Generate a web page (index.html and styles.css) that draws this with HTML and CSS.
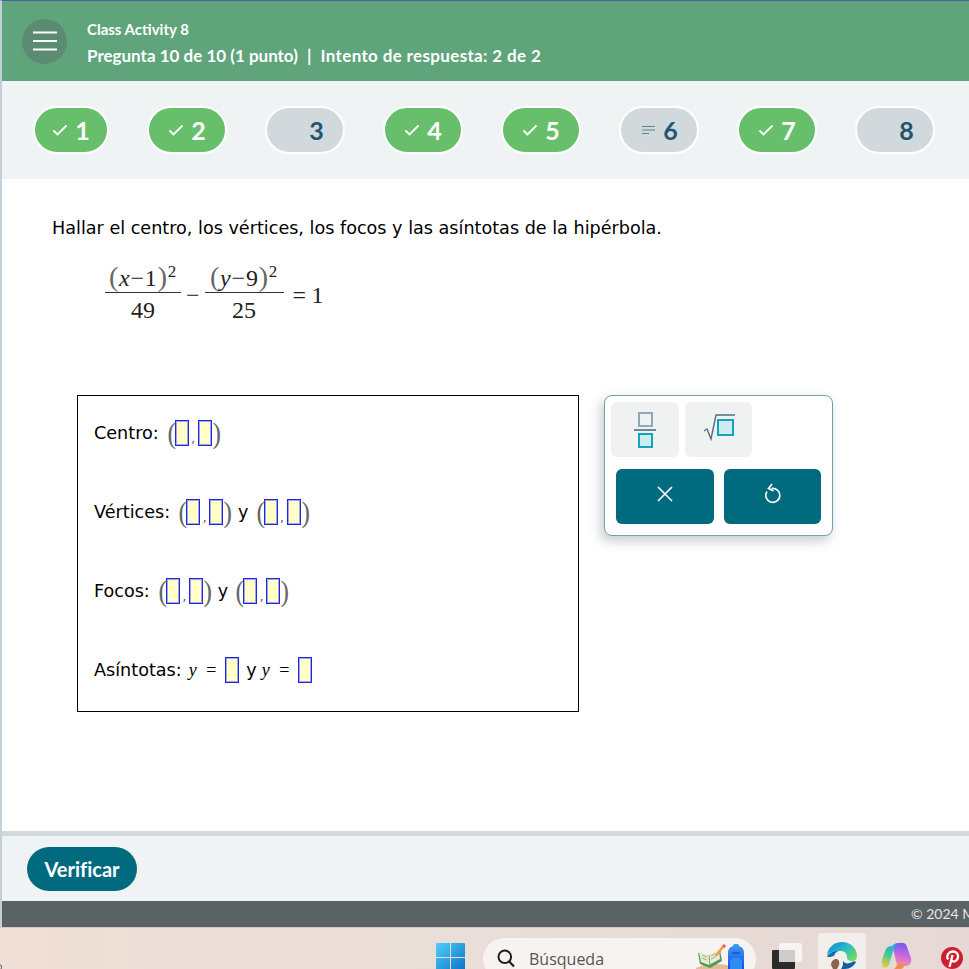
FILE: index.html

```html
<!DOCTYPE html>
<html lang="en">
<head>
    <meta charset="UTF-8">
    <meta name="viewport" content="width=device-width, initial-scale=1.0">
    <title>Class Activity 8</title>
    <link rel="stylesheet" href="styles.css">
</head>
<body>
    <div class="window">
        <header class="top-bar">
            <button class="menu-btn" aria-label="Menu">
                <svg width="24" height="20" viewBox="0 0 24 20"><path d="M0 1.5h24M0 10h24M0 18.5h24" stroke="#fff" stroke-width="2"/></svg>
            </button>
            <div class="top-text">
                <div class="activity-name">Class Activity 8</div>
                <div class="question-info">Pregunta 10 de 10 (1 punto) <span class="sep">|</span> <span class="attempt">Intento de respuesta: 2 de 2</span></div>
            </div>
        </header>

        <nav class="question-nav">
            <div class="pill done first"><svg class="pill-icon" width="16" height="12" viewBox="0 0 16 12"><path d="M1.5 6.5l4 4L14.5 1.5" fill="none" stroke="#fff" stroke-width="1.8"/></svg><span>1</span></div>
            <div class="pill done"><svg class="pill-icon" width="16" height="12" viewBox="0 0 16 12"><path d="M1.5 6.5l4 4L14.5 1.5" fill="none" stroke="#fff" stroke-width="1.8"/></svg><span>2</span></div>
            <div class="pill"><span class="pill-icon"></span><span>3</span></div>
            <div class="pill done"><svg class="pill-icon" width="16" height="12" viewBox="0 0 16 12"><path d="M1.5 6.5l4 4L14.5 1.5" fill="none" stroke="#fff" stroke-width="1.8"/></svg><span>4</span></div>
            <div class="pill done"><svg class="pill-icon" width="16" height="12" viewBox="0 0 16 12"><path d="M1.5 6.5l4 4L14.5 1.5" fill="none" stroke="#fff" stroke-width="1.8"/></svg><span>5</span></div>
            <div class="pill"><svg class="pill-icon" width="16" height="12" viewBox="0 0 16 12"><path d="M2 2.5h13M2 6h13M2 9.500h7" fill="none" stroke="#5d8493" stroke-width="1.2"/></svg><span>6</span></div>
            <div class="pill done"><svg class="pill-icon" width="16" height="12" viewBox="0 0 16 12"><path d="M1.5 6.5l4 4L14.5 1.5" fill="none" stroke="#fff" stroke-width="1.8"/></svg><span>7</span></div>
            <div class="pill"><span class="pill-icon"></span><span>8</span></div>
        </nav>

        <main class="content">
            <p class="prompt">Hallar el centro, los vértices, los focos y las asíntotas de la hipérbola.</p>

            <div class="equation">
                <div class="frac">
                    <div class="num"><span class="big-paren">(</span><i>x</i>&minus;1<span class="big-paren">)</span><sup>2</sup></div>
                    <div class="den">49</div>
                </div>
                <span class="op">&minus;</span>
                <div class="frac wide">
                    <div class="num"><span class="big-paren">(</span><i>y</i>&minus;9<span class="big-paren">)</span><sup>2</sup></div>
                    <div class="den">25</div>
                </div>
                <span class="op equals">= 1</span>
            </div>

            <div class="work-area">
                <div class="answer-box">
                    <div class="answer-row">
                        <span class="row-label">Centro:</span>
                        <span class="pair"><span class="paren">(</span><span class="slot"></span><span class="comma">,</span><span class="slot"></span><span class="paren">)</span></span>
                    </div>
                    <div class="answer-row">
                        <span class="row-label">Vértices:</span>
                        <span class="pair"><span class="paren">(</span><span class="slot"></span><span class="comma">,</span><span class="slot"></span><span class="paren">)</span></span>
                        <span>y</span>
                        <span class="pair"><span class="paren">(</span><span class="slot"></span><span class="comma">,</span><span class="slot"></span><span class="paren">)</span></span>
                    </div>
                    <div class="answer-row">
                        <span class="row-label">Focos:</span>
                        <span class="pair"><span class="paren">(</span><span class="slot"></span><span class="comma">,</span><span class="slot"></span><span class="paren">)</span></span>
                        <span>y</span>
                        <span class="pair"><span class="paren">(</span><span class="slot"></span><span class="comma">,</span><span class="slot"></span><span class="paren">)</span></span>
                    </div>
                    <div class="answer-row">
                        <span>Asíntotas:</span>
                        <span class="math-var"><i>y</i> =</span><span class="slot"></span>
                        <span class="and-y">y</span>
                        <span class="math-var"><i>y</i> =</span><span class="slot"></span>
                    </div>
                </div>

                <div class="palette">
                    <div class="palette-tools">
                        <button class="tool" aria-label="Fraction">
                            <svg width="22" height="36" viewBox="0 0 22 36">
                                <rect x="5" y="1" width="13" height="13" fill="#f0f2f2" stroke="#8ea9b3" stroke-width="2"/>
                                <path d="M0 18h22" stroke="#6d8b96" stroke-width="2"/>
                                <rect x="5" y="22" width="13" height="13" fill="#cfecf2" stroke="#12a3bd" stroke-width="2"/>
                            </svg>
                        </button>
                        <button class="tool" aria-label="Square root">
                            <svg width="32" height="28" viewBox="0 0 32 28">
                                <path d="M1 18l3-2 4 10 5-24h19" fill="none" stroke="#4f6f7c" stroke-width="1.4"/>
                                <rect x="15" y="7" width="15" height="15" fill="#cfecf2" stroke="#12a3bd" stroke-width="2"/>
                            </svg>
                        </button>
                    </div>
                    <div class="palette-actions">
                        <button class="action" aria-label="Clear">
                            <svg width="16" height="16" viewBox="0 0 16 16"><path d="M1 1l14 14M15 1L1 15" stroke="#fff" stroke-width="1.7"/></svg>
                        </button>
                        <button class="action" aria-label="Undo">
                            <svg width="16" height="22" viewBox="0 0 16 22"><path d="M6.500 5.500a7 7 0 1 1-4.500 3M7 1L3.500 5.500 8.500 8" fill="none" stroke="#fff" stroke-width="1.6"/></svg>
                        </button>
                    </div>
                </div>
            </div>
        </main>

        <div class="action-bar">
            <button class="verify-btn">Verificar</button>
        </div>
        <footer class="copyright">&copy; 2024 McGraw Hill</footer>
    </div>

    <div class="taskbar">
        <svg class="desk-sliver" width="3" height="6" viewBox="0 0 3 6"><path d="M0 0.500c2 1 2 4 0 5.500" fill="none" stroke="#444" stroke-width="1"/></svg>
        <svg class="win-logo" width="29" height="26" viewBox="0 0 29 26">
            <defs>
                <linearGradient id="winBlue" x1="0" y1="0" x2="1" y2="1"><stop offset="0" stop-color="#4fd0fa"/><stop offset="1" stop-color="#0a6fc4"/></linearGradient>
            </defs>
            <path d="M0 1a1 1 0 0 1 1-1h13v14H0zM15 0h13a1 1 0 0 1 1 1v13H15zM0 15h14v14H0zM15 15h14v14H15z" fill="url(#winBlue)"/>
        </svg>
        <div class="search-box">
            <svg class="search-icon" width="18" height="18" viewBox="0 0 18 18"><circle cx="7.800" cy="7.800" r="6.300" fill="none" stroke="#222" stroke-width="2"/><path d="M12.200 12.500l4.800 5" stroke="#222" stroke-width="2.200"/></svg>
            <span class="search-text">Búsqueda</span>
            <svg class="search-art" width="50" height="26" viewBox="0 0 50 26">
                <defs>
                    <linearGradient id="packBlue" x1="0" y1="0" x2="0" y2="1"><stop offset="0" stop-color="#3f9bf5"/><stop offset="1" stop-color="#1553e0"/></linearGradient>
                </defs>
                <ellipse cx="20" cy="30" rx="24" ry="9" fill="#e0bd92"/>
                <path d="M2 10l11 3 11-6 2 11-12 7L4 21z" fill="#4f9a5c"/>
                <path d="M3 9l10 3 10-5 1 9-11 6-8-3z" fill="#e9edd2"/>
                <path d="M6 12l5 2M6 15l5 2M15 13l5-2.500M15 16l5-2.500" stroke="#8a9a7a" stroke-width="0.800"/>
                <path d="M13 12l1 10" stroke="#7f9a72" stroke-width="1"/>
                <path d="M19 12l7-9 2 1.500-7 9z" fill="#ef9a3c"/>
                <path d="M26 3l2-2 2 2-1.500 2z" fill="#e5574d"/>
                <path d="M32 26V10c0-4 2-6 5-7 0-3 6-3 6 0 3 1 5 3 5 7v16z" fill="url(#packBlue)"/>
                <path d="M34 26v-7c0-6 12-6 12 0v7z" fill="#2e8cf2"/>
                <path d="M36 10h8" stroke="#0d3fb0" stroke-width="1"/>
            </svg>
        </div>
        <svg class="task-view" width="31" height="26" viewBox="0 0 31 26">
            <rect x="7" y="0" width="23" height="19" rx="2" fill="#f7f4f2"/>
            <rect x="0" y="7" width="23" height="19" rx="1" fill="#2b2b2b"/>
            <rect x="7" y="7" width="16" height="12" fill="#cfcdcb"/>
        </svg>
        <div class="task-tile">
            <svg width="30" height="27" viewBox="0 0 30 27">
                <defs>
                    <linearGradient id="edgeGrad" x1="0" y1="0" x2="1" y2="0.800"><stop offset="0" stop-color="#1583c9"/><stop offset="0.500" stop-color="#25b8cf"/><stop offset="1" stop-color="#74dc58"/></linearGradient>
                </defs>
                <path d="M0 15C0 6 7 0 15 0c8 0 15 6 15 14 0 3-2 5-5 5-4 0-5-2-5-4 0-4-3-6-6-6C7 9 0 10 0 15z" fill="url(#edgeGrad)"/>
                <path d="M0 15c2-5 7-6 11-6-3 2-4 4-4 6z" fill="#0d72b5"/>
                <path d="M16 19c2 3 6 3 9 1 2-1 3-1 4 0-2 4-6 7-11 7h-4z" fill="#0f5ea8"/>
                <path d="M2 27c-3-6 0-13 5-13 2 0 2 1 4 0 3 0 5 3 5 7 0 3-1 4-2 6z" fill="#f3efe6"/>
                <path d="M4 23c0-4 3-6 5-6s4 2 3 6l-2 4H6z" fill="#8a6452"/>
            </svg>
        </div>
        <svg class="copilot" width="30" height="26" viewBox="0 0 30 26">
            <defs>
                <linearGradient id="copA" x1="0.500" y1="0" x2="0.300" y2="1"><stop offset="0" stop-color="#1fa8ec"/><stop offset="0.500" stop-color="#3fcf8f"/><stop offset="1" stop-color="#f6c73c"/></linearGradient>
                <linearGradient id="copB" x1="0.600" y1="0" x2="0.500" y2="1"><stop offset="0" stop-color="#6a5cf0"/><stop offset="0.500" stop-color="#c566e0"/><stop offset="1" stop-color="#f58ab0"/></linearGradient>
            </defs>
            <path d="M17 0h4c2 0 3 1 4 4l4 11c1 4-1 8-5 8h-6c-3 0-3-2-4-5L11 5c-1-3 2-5 6-5z" fill="url(#copB)"/>
            <path d="M10 3c2-2 5-3 7-3-3 1-4 3-5 6l-4 12c-1 5-3 8-7 6-2-3-1-7 0-10l3-8c1-2 3-3 6-3z" fill="url(#copA)"/>
            <path d="M12 26h6c3 0 4-2 5-5l1-3c-2 2-6 2-8 2l-1 2c-1 2-2 3-3 4z" fill="#f48a5e"/>
        </svg>
        <svg class="pinterest" width="22" height="22" viewBox="0 0 22 22">
            <circle cx="11" cy="11" r="11" fill="#cf1f2c"/>
            <path d="M8.500 20L11.500 8M7 12.500C5 8 8 4.500 11.800 4.500c3.700 0 5.700 2.700 5.200 5.700-.5 3-3 5-5.200 4-1-.4-1.300-1-1.300-1" fill="none" stroke="#fff" stroke-width="2.300"/>
        </svg>
    </div>
</body>
</html>
```

FILE: styles.css

```css
* {
    box-sizing: border-box;
}
html, body {
    height: 969px;
}
body {
    margin: 0;
    overflow: hidden;
    font-family: "DejaVu Sans", sans-serif;
    color: black;
    background: white;
}
button {
    border: none;
    padding: 0;
    display: flex;
    align-items: center;
    justify-content: center;
    cursor: pointer;
}
.window {
    height: 927px;
    display: flex;
    flex-direction: column;
    border-left: 2px solid #c3d0da;
    border-top: 1px solid #4d62a6;
}
.top-bar {
    height: 80px;
    background: #60a47c;
    color: white;
    display: flex;
    align-items: center;
    padding-left: 20px;
    gap: 20px;
    font-family: Lato, sans-serif;
    font-weight: 700;
}
.menu-btn {
    width: 45px;
    height: 45px;
    border-radius: 50%;
    background: #5c8b74;
}
.top-text {
    display: flex;
    flex-direction: column;
    gap: 7px;
    padding-top: 3px;
}
.activity-name {
    font-size: 15px;
}
.question-info {
    font-size: 17px;
}
.sep {
    margin: 0 5px;
}
.attempt {
    letter-spacing: 0.35px;
}
.question-nav {
    height: 98px;
    background: #eff3f4;
    display: flex;
    align-items: center;
    gap: 38px;
    padding-left: 31px;
    font-family: Lato, sans-serif;
    font-weight: 700;
    font-size: 25px;
}
.pill {
    width: 80px;
    height: 48px;
    border: 2px solid white;
    border-radius: 24px;
    background: #d1d9dc;
    color: #22556f;
    display: flex;
    align-items: center;
    justify-content: center;
    gap: 7px;
}
.pill.done {
    background: #67bf6b;
    color: white;
}
.pill.first {
    width: 76px;
}
.pill-icon {
    width: 16px;
    flex: none;
}
.content {
    flex: 1;
    background: white;
    padding: 37px 0 0 50px;
}
.prompt {
    margin: 0;
    font-size: 17.600px;
    line-height: 24px;
}
.equation {
    display: flex;
    align-items: center;
    gap: 5px;
    margin: 24px 0 0 53px;
    font-family: "Liberation Serif", serif;
    font-size: 24px;
    color: #222;
}
.frac {
    display: flex;
    flex-direction: column;
    align-items: center;
    width: 76px;
}
.frac.wide {
    width: 79px;
}
.num {
    border-bottom: 1px solid #333;
    width: 100%;
    text-align: center;
    white-space: nowrap;
    line-height: 28px;
    letter-spacing: 0.8px;
}
.big-paren {
    font-size: 28px;
    line-height: 0;
    color: #666;
}
.num sup {
    font-size: 17px;
    line-height: 0;
}
.den {
    line-height: 34px;
}
.equals {
    margin-left: 4px;
    word-spacing: -0.5px;
}
.work-area {
    display: flex;
    align-items: flex-start;
    gap: 25px;
    margin: 68px 0 0 25px;
}
.answer-box {
    width: 502px;
    height: 317px;
    border: 1px solid black;
    padding-left: 16px;
    display: grid;
    grid-auto-rows: 79px;
    font-size: 17.600px;
}
.answer-row {
    display: flex;
    align-items: center;
    gap: 7px;
    padding-bottom: 5px;
}
.row-label {
    margin-right: 1px;
}
.and-y {
    margin-right: -2px;
}
.pair {
    display: inline-flex;
    align-items: center;
}
.paren {
    width: 8px;
    font-family: "Liberation Serif", serif;
    font-size: 30px;
    line-height: 28px;
    color: #666;
    text-align: center;
    transform: scaleX(0.85);
}
.comma {
    width: 9px;
    font-size: 12px;
    text-align: center;
    color: #555;
    align-self: flex-end;
    margin-bottom: 1px;
}
.slot {
    width: 14px;
    height: 26px;
    border: 1px solid #1f24f0;
    outline: 1px solid rgba(31, 36, 240, 0.4);
    outline-offset: -2px;
    background: #ffffc8;
    flex: none;
}
.math-var {
    font-family: "Liberation Serif", serif;
    font-size: 18px;
    word-spacing: 5px;
    white-space: pre;
    margin-right: 2px;
}
.palette {
    width: 229px;
    height: 141px;
    background: white;
    border: 1px solid #7b9ea8;
    border-radius: 8px;
    box-shadow: -3px 5px 12px rgba(60, 90, 100, 0.3);
    padding: 6px;
}
.palette-tools {
    display: flex;
    gap: 6px;
}
.tool {
    width: 68px;
    height: 55px;
    border-radius: 6px;
    background: #f0f2f2;
}
.tool:nth-child(2) {
    width: 67px;
    padding-bottom: 6px;
}
.palette-actions {
    display: flex;
    gap: 10px;
    margin: 12px 0 0 5px;
}
.action {
    width: 98px;
    height: 55px;
    border-radius: 6px;
    background: #006b7f;
    padding-bottom: 6px;
}
.action:nth-child(2) {
    width: 97px;
}
.action-bar {
    height: 70px;
    background: #eff3f4;
    border-top: 5px solid #d1d9dc;
    padding: 11px 0 0 25px;
}
.verify-btn {
    width: 110px;
    height: 44px;
    border-radius: 22px;
    background: #006b7f;
    color: white;
    font-family: Lato, sans-serif;
    font-weight: 700;
    font-size: 20px;
    font-variant-ligatures: none;
}
.copyright {
    height: 26px;
    background: #5a6263;
    color: #e3e6e6;
    font-family: Lato, sans-serif;
    font-size: 14px;
    line-height: 26px;
    padding-left: 909px;
    white-space: nowrap;
    overflow: hidden;
}
.taskbar {
    height: 42px;
    background: linear-gradient(to right, #efdfd6, #e9ded8 50%, #e6d8d4);
    border-top: 1px solid #d8c8c0;
    display: flex;
    align-items: flex-start;
    overflow: hidden;
}
.taskbar > * {
    flex: none;
}
.desk-sliver {
    margin-top: 36px;
}
.win-logo {
    margin: 15px 0 0 433px;
}
.search-box {
    width: 273px;
    height: 42px;
    margin: 10px 0 0 18px;
    border-radius: 21px;
    background: #f6f3f0;
    display: flex;
    align-items: flex-start;
    padding: 11px 0 0 14px;
    gap: 14px;
    color: #555;
    font-family: "Open Sans", sans-serif;
    font-size: 16px;
    overflow: hidden;
}
.search-icon {
    flex: none;
}
.search-text {
    line-height: 20px;
}
.search-art {
    flex: none;
    margin: -6px 0 0 78px;
}
.task-view {
    margin: 15px 0 0 16px;
}
.task-tile {
    width: 48px;
    height: 40px;
    margin: 5px 0 0 15px;
    padding: 9px 0 0 9px;
    border-radius: 4px 4px 0 0;
    background: #f2eeeb;
}
.copilot {
    margin: 15px 0 0 16px;
}
.pinterest {
    margin: 19px 0 0 29px;
}
```
